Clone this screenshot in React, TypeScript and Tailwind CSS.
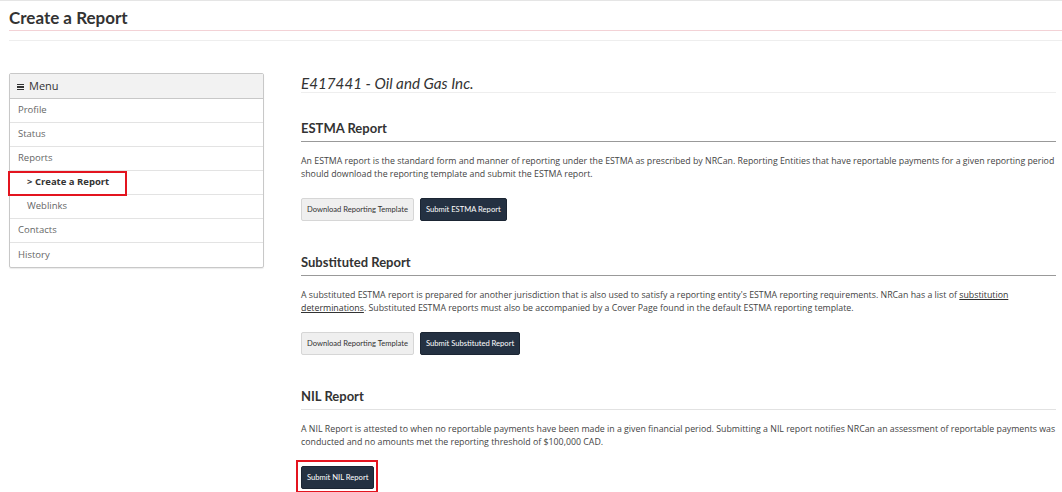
import React from "react";

const menuItems = [
  { label: "Profile", sub: false, active: false },
  { label: "Status", sub: false, active: false },
  { label: "Reports", sub: false, active: false },
  { label: "> Create a Report", sub: true, active: true },
  { label: "Weblinks", sub: true, active: false },
  { label: "Contacts", sub: false, active: false },
  { label: "History", sub: false, active: false },
];

const lato = "font-['Lato','Liberation_Sans',sans-serif]";
const openSans = "font-['Open_Sans','Liberation_Sans',sans-serif]";

function Section({
  title,
  light,
  children,
  buttons,
}: {
  title: string;
  light?: boolean;
  children: React.ReactNode;
  buttons: React.ReactNode;
}) {
  return (
    <div className="mb-[33px]">
      <h2 className={`${lato} text-[13px] font-bold text-[#333] leading-[16px] pb-[5px] border-b ${light ? "border-[#e2e2e2]" : "border-[#999]"}`}>
        {title}
      </h2>
      <p className={`${openSans} text-[8.8px] leading-[13px] text-[#444] mt-[13px]`}>{children}</p>
      <div className="flex gap-[6px] mt-[17px]">{buttons}</div>
    </div>
  );
}

function LightButton({ children }: { children: React.ReactNode }) {
  return (
    <button className={`${lato} h-[23px] px-[5px] text-[7.6px] text-[#333] bg-[#efefef] border border-[#d6d6d6] rounded-[2px]`}>
      {children}
    </button>
  );
}

function DarkButton({ children }: { children: React.ReactNode }) {
  return (
    <button className={`${lato} h-[23px] px-[5px] text-[7.6px] text-white bg-[#243142] border border-[#1b2533] rounded-[2px]`}>
      {children}
    </button>
  );
}

export default function App() {
  return (
    <div className="w-[1062px] h-[492px] bg-white overflow-hidden border-t border-[#e5e5e5]">
      {/* Page title */}
      <div className="pl-[9px]">
        <h1 className={`${lato} text-[17px] font-bold text-[#333] leading-[20px] pt-[7px] pb-[2px] border-b border-[#f3d2d6]`}>
          Create a Report
        </h1>
        <div className="h-[10px] border-b border-[#eeeeee]" />
      </div>

      <div className="flex pl-[9px] pt-[32px]">
        {/* Menu */}
        <div className="w-[255px] shrink-0">
          <div className="border border-[#c8c8c8] rounded-[2px] shadow-[0_1px_1px_rgba(0,0,0,0.08)]">
            <div className={`${openSans} h-[25px] flex items-center px-[7px] bg-[#f2f2f2] border-b border-[#c8c8c8] text-[11px] text-[#333]`}>
              <span className="inline-flex flex-col gap-[1px] mr-[5px] mt-[2px]">
                <span className="block w-[7px] h-[1.5px] bg-[#333]" />
                <span className="block w-[7px] h-[1.5px] bg-[#333]" />
                <span className="block w-[7px] h-[1.5px] bg-[#333]" />
              </span>
              Menu
            </div>
            {menuItems.map((item, i) => (
              <div
                key={item.label}
                className={`${openSans} relative h-[24px] flex items-center text-[9.5px] ${i < menuItems.length - 1 ? "border-b border-[#e3e3e3]" : ""} ${item.sub ? "pl-[17px]" : "pl-[8px]"} ${item.active ? "font-bold text-[#333]" : "text-[#666]"}`}
              >
                {item.label}
                {item.active && (
                  <span className="absolute left-[-2px] top-0 w-[119px] h-[25px] border-[2px] border-[#e3141f]" />
                )}
              </div>
            ))}
          </div>
        </div>

        {/* Content */}
        <div className="ml-[37px] flex-1 pr-[6px]">
          <div className={`${lato} italic text-[15.2px] text-[#333] leading-[18px] pt-[1px] border-b border-[#eeeeee]`}>
            E417441 - Oil and Gas Inc.
          </div>

          <div className="mt-[27px]">
            <Section
              title="ESTMA Report"
              buttons={
                <>
                  <LightButton>Download Reporting Template</LightButton>
                  <DarkButton>Submit ESTMA Report</DarkButton>
                </>
              }
            >
              An ESTMA report is the standard form and manner of reporting under the ESTMA as prescribed by NRCan. Reporting Entities that have reportable payments for a given reporting period should download the reporting template and submit the ESTMA report.
            </Section>

            <Section
              title="Substituted Report"
              buttons={
                <>
                  <LightButton>Download Reporting Template</LightButton>
                  <DarkButton>Submit Substituted Report</DarkButton>
                </>
              }
            >
              A substituted ESTMA report is prepared for another jurisdiction that is also used to satisfy a reporting entity's ESTMA reporting requirements. NRCan has a list of{" "}
              <a className="underline text-[#333]">substitution determinations</a>. Substituted ESTMA reports must also be accompanied by a Cover Page found in the default ESTMA reporting template.
            </Section>

            <Section
              title="NIL Report"
              light
              buttons={
                <span className="relative inline-flex">
                  <DarkButton>Submit NIL Report</DarkButton>
                  <span className="absolute -left-[5px] -top-[6px] -right-[4px] -bottom-[4px] border-[2px] border-[#e3141f]" />
                </span>
              }
            >
              A NIL Report is attested to when no reportable payments have been made in a given financial period. Submitting a NIL report notifies NRCan an assessment of reportable payments was conducted and no amounts met the reporting threshold of $100,000 CAD.
            </Section>
          </div>
        </div>
      </div>
    </div>
  );
}
